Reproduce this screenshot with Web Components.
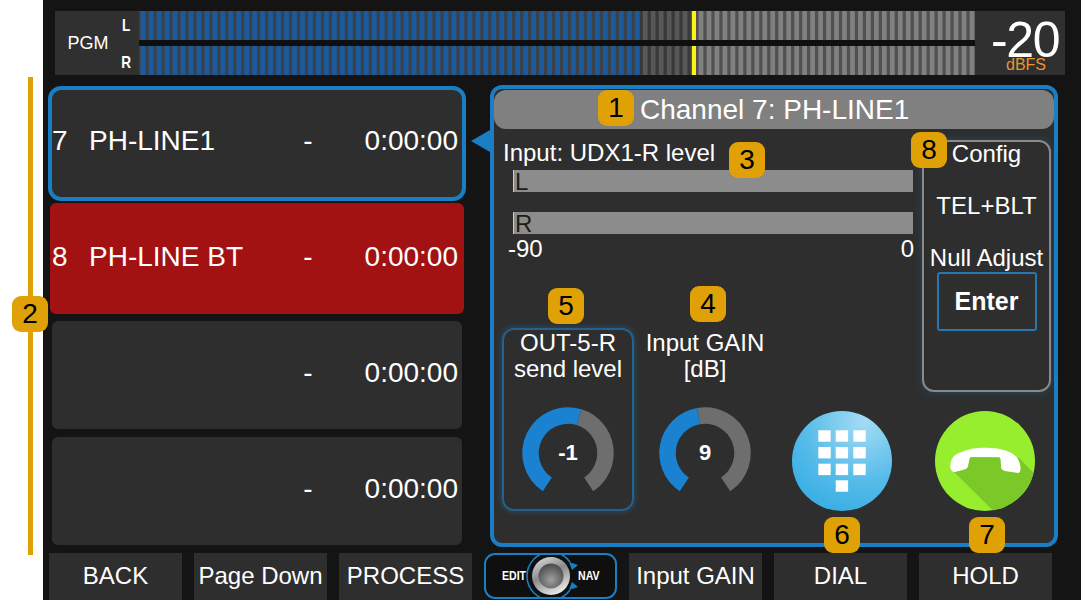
<!DOCTYPE html>
<html>
<head>
<meta charset="utf-8">
<title>Channel 7</title>
<style>
  html, body { margin: 0; padding: 0; background: #fff; }
  body { font-family: "Liberation Sans", Arial, sans-serif; color: #fff; }
</style>
</head>
<body>
<app-screen>
  <meter-row slot="top" label="PGM" value="-20" unit="dBFS"></meter-row>

  <channel-card slot="list" num="7" name="PH-LINE1" time="0:00:00" selected></channel-card>
  <channel-card slot="list" num="8" name="PH-LINE BT" time="0:00:00" alert></channel-card>
  <channel-card slot="list" time="0:00:00"></channel-card>
  <channel-card slot="list" time="0:00:00"></channel-card>

  <channel-panel slot="panel" title="Channel 7: PH-LINE1">
    <level-block slot="level" heading="Input: UDX1-R level" min="-90" max="0"></level-block>
    <config-box slot="config" heading="Config" mode="TEL+BLT" action="Null Adjust" button="Enter"></config-box>
    <gauge-card slot="gauge1" line1="OUT-5-R" line2="send level" value="-1" end="17" active></gauge-card>
    <gauge-card slot="gauge2" line1="Input GAIN" line2="[dB]" value="9" end="-10"></gauge-card>
    <dial-icon slot="dial"></dial-icon>
    <hold-icon slot="hold"></hold-icon>
  </channel-panel>

  <foot-button slot="foot">BACK</foot-button>
  <foot-button slot="foot">Page Down</foot-button>
  <foot-button slot="foot">PROCESS</foot-button>
  <foot-knob slot="foot"></foot-knob>
  <foot-button slot="foot">Input GAIN</foot-button>
  <foot-button slot="foot">DIAL</foot-button>
  <foot-button slot="foot">HOLD</foot-button>

  <num-badge slot="badges" style="left:598px;top:90px">1</num-badge>
  <num-badge slot="badges" style="left:12px;top:296px">2</num-badge>
  <num-badge slot="badges" style="left:729px;top:142px">3</num-badge>
  <num-badge slot="badges" style="left:690px;top:286px">4</num-badge>
  <num-badge slot="badges" style="left:548px;top:288px">5</num-badge>
  <num-badge slot="badges" style="left:824px;top:517px">6</num-badge>
  <num-badge slot="badges" style="left:969px;top:517px">7</num-badge>
  <num-badge slot="badges" style="left:911px;top:132px">8</num-badge>
</app-screen>

<script>
class AppScreen extends HTMLElement {
  constructor() {
    super();
    this.attachShadow({mode: 'open'}).innerHTML = `
      <style>
        :host { display: flex; position: relative; width: 1081px; height: 600px; overflow: hidden; background: #fff; }
        .strip { width: 43px; flex: none; padding-top: 77px; box-sizing: border-box; }
        .strip i { display: block; width: 5px; height: 478px; margin-left: 28px; background: #e0a106; }
        .main { flex: 1; background: #141414; display: flex; flex-direction: column; padding: 11px 0 0 5px; min-width: 0; }
        .content { display: flex; margin-top: 10px; height: 462px; }
        .list { width: 418px; display: flex; flex-direction: column; }
        .right { margin-left: 24px; }
        .foot { display: flex; gap: 12px; margin: 6px 0 0 1px; }
      </style>
      <div class="strip"><i></i></div>
      <div class="main">
        <slot name="top"></slot>
        <div class="content">
          <div class="list"><slot name="list"></slot></div>
          <div class="right"><slot name="panel"></slot></div>
        </div>
        <div class="foot"><slot name="foot"></slot></div>
      </div>
      <slot name="badges"></slot>
    `;
  }
}

class NumBadge extends HTMLElement {
  constructor() {
    super();
    this.attachShadow({mode: 'open'}).innerHTML = `
      <style>
        :host {
          position: absolute; width: 36px; height: 36px; border-radius: 9px;
          background: #e0a106; color: #000; font-size: 28px; line-height: 36px; text-align: center;
        }
      </style>
      <slot></slot>
    `;
  }
}

class MeterRow extends HTMLElement {
  // one row of the LED bar, drawn as thin rects so the soft stripe edges survive
  bar() {
    let rects = '';
    for (let k = -60; k < 46; k++) {
      const x = 472 + 7.97 * k;
      const fill = x < 500 ? '#1a5a9e' : x < 553 ? '#585858' : '#808080';
      rects += `<rect x="${x.toFixed(2)}" width="4.7" height="29" fill="${fill}"/>`;
    }
    return `
      <svg width="836" height="29" viewBox="0 0 836 29">
        <rect width="501" height="29" fill="#3c4148"/>
        <rect x="501" width="52" height="29" fill="#393939"/>
        <rect x="553" width="283" height="29" fill="#505050"/>
        ${rects}
        <rect x="553" width="4" height="29" fill="#fbf315"/>
      </svg>`;
  }

  connectedCallback() {
    this.attachShadow({mode: 'open'}).innerHTML = `
      <style>
        :host { display: flex; width: 1010px; margin-left: 7px; height: 64px; background: #303030; }
        .tag { width: 60px; flex: none; display: flex; align-items: center; justify-content: center; font-size: 18px; padding-left: 6px; box-sizing: border-box; }
        .lr { width: 24px; flex: none; display: flex; flex-direction: column; justify-content: space-between; align-items: center; font-size: 17px; line-height: 18px; font-weight: bold; padding: 6px 2px 3px 0; box-sizing: border-box; }
        .lr span { display: block; transform: scaleX(.8); }
        .bars { flex: 1; display: flex; flex-direction: column; justify-content: space-between; background: #0f0f0f; }
        svg { display: block; }
        .value { width: 90px; flex: none; position: relative; text-align: left; }
        .num { position: absolute; left: 16px; top: 11px; font-size: 50px; line-height: 36px; letter-spacing: -1.3px; }
        .unit { position: absolute; left: 31px; top: 48px; font-size: 16px; line-height: 12px; color: #e8962e; }
      </style>
      <div class="tag">${this.getAttribute('label')}</div>
      <div class="lr"><span>L</span><span>R</span></div>
      <div class="bars">${this.bar()}${this.bar()}</div>
      <div class="value">
        <span class="num">${this.getAttribute('value')}</span>
        <span class="unit">${this.getAttribute('unit')}</span>
      </div>
    `;
  }
}

class ChannelCard extends HTMLElement {
  connectedCallback() {
    this.attachShadow({mode: 'open'}).innerHTML = `
      <style>
        :host {
          display: grid; grid-template-columns: 37px 190px 58px 1fr; align-items: center;
          position: relative; box-sizing: border-box; flex: none;
          height: 108px; margin: 0 4px 8px; padding: 0 4px 4px 0;
          background: #2e2e2e; border-radius: 6px; font-size: 28px;
        }
        :host([selected]) {
          height: 115px; margin: 1px 0 2px; padding: 0 4px 6px 0;
          border: 4px solid #1a7ec4; border-radius: 13px;
        }
        :host([alert]) {
          height: 111px; margin: 0 2px 7px; background: #a31212; padding: 0 6px 3px 2px;
        }
        .arrow { display: none; position: absolute; left: 419px; top: 40px; width: 0; height: 0;
          border: 11px solid transparent; border-right: 19px solid #1a7ec4; border-left: 0; }
        :host([selected]) .arrow { display: block; }
        .dash { text-align: center; }
        .time { text-align: right; }
      </style>
      <span class="num">${this.getAttribute('num') || ''}</span>
      <span class="name">${this.getAttribute('name') || ''}</span>
      <span class="dash">-</span>
      <span class="time">${this.getAttribute('time')}</span>
      <span class="arrow"></span>
    `;
  }
}

class ChannelPanel extends HTMLElement {
  connectedCallback() {
    this.attachShadow({mode: 'open'}).innerHTML = `
      <style>
        :host {
          display: block; box-sizing: border-box; width: 568px; height: 462px;
          background: #2e2e2e; border: 4px solid #1a7ec4; border-radius: 12px;
        }
        .title {
          height: 39px; margin: 1px 0 0; border-radius: 12px; background: #808080;
          font-size: 28px; line-height: 39px; padding-left: 146px;
        }
        .body {
          display: grid; margin: 11px 0 0 8px;
          grid-template-columns: 138px 130px 152px 129px;
          grid-template-rows: 188px 64px 119px;
        }
        .level { grid-column: 1 / 4; grid-row: 1; }
        .config { grid-column: 4; grid-row: 1 / 3; display: flex; }
        .g1 { grid-column: 1; grid-row: 2 / 4; display: flex; }
        .g2 { grid-column: 2; grid-row: 2 / 4; display: flex; }
        .dial { grid-column: 3; grid-row: 3; display: flex; justify-content: center; align-items: flex-end; padding-right: 8px; }
        .hold { grid-column: 4; grid-row: 3; display: flex; justify-content: center; align-items: flex-end; padding-right: 3px; }
      </style>
      <div class="title">${this.getAttribute('title')}</div>
      <div class="body">
        <div class="level"><slot name="level"></slot></div>
        <div class="config"><slot name="config"></slot></div>
        <div class="g1"><slot name="gauge1"></slot></div>
        <div class="g2"><slot name="gauge2"></slot></div>
        <div class="dial"><slot name="dial"></slot></div>
        <div class="hold"><slot name="hold"></slot></div>
      </div>
    `;
  }
}

class LevelBlock extends HTMLElement {
  connectedCallback() {
    this.attachShadow({mode: 'open'}).innerHTML = `
      <style>
        :host { display: block; font-size: 24px; }
        .head { margin-left: 1px; line-height: 25px; height: 30px; }
        .bar {
          height: 22px; margin: 0 9px 20px 11px; background: #8c8c8c; color: #1c1c1c;
          border-left: 1px solid #efdc1e; line-height: 24px; box-sizing: border-box; padding-left: 1px;
        }
        .scale { display: flex; justify-content: space-between; margin: -20px 8px 0 6px; line-height: 30px; }
      </style>
      <div class="head">${this.getAttribute('heading')}</div>
      <div class="bar">L</div>
      <div class="bar">R</div>
      <div class="scale"><span>${this.getAttribute('min')}</span><span>${this.getAttribute('max')}</span></div>
    `;
  }
}

class ConfigBox extends HTMLElement {
  connectedCallback() {
    this.attachShadow({mode: 'open'}).innerHTML = `
      <style>
        :host {
          display: flex; flex-direction: column; align-items: center; box-sizing: border-box;
          width: 129px; height: 252px;
          border: 2px solid #8a8a8a; border-radius: 12px;
          box-shadow: 0 0 8px rgba(26, 126, 196, .35);
          font-size: 24px;
        }
        .row { line-height: 26px; white-space: nowrap; }
        .head { margin-top: -1px; }
        .mode { margin-top: 26px; }
        .act { margin-top: 26px; }
        button {
          display: block; box-sizing: border-box; width: 100px; height: 59px; margin-top: 1px;
          background: none; color: #fff; border: 2px solid #2a76ae; border-radius: 3px;
          font: bold 25px "Liberation Sans", Arial, sans-serif;
        }
      </style>
      <div class="row head">${this.getAttribute('heading')}</div>
      <div class="row mode">${this.getAttribute('mode')}</div>
      <div class="row act">${this.getAttribute('action')}</div>
      <button>${this.getAttribute('button')}</button>
    `;
  }
}

class GaugeCard extends HTMLElement {
  // point on the ring, deg measured clockwise from the top
  pt(deg) {
    const r = (deg * Math.PI) / 180;
    return (50 + 37.5 * Math.sin(r)).toFixed(2) + ' ' + (50 - 37.5 * Math.cos(r)).toFixed(2);
  }

  connectedCallback() {
    const start = -146.5, stop = 146.5, end = Number(this.getAttribute('end'));
    this.attachShadow({mode: 'open'}).innerHTML = `
      <style>
        :host {
          display: flex; flex-direction: column; align-items: center; box-sizing: border-box;
          width: 132px; height: 183px; border: 2px solid transparent; border-radius: 12px;
          font-size: 24px; line-height: 26px; text-align: center;
        }
        :host([active]) { border-color: #25618c; box-shadow: 0 0 7px rgba(26, 126, 196, .45); }
        .txt { white-space: nowrap; }
        .ring { position: relative; width: 100px; height: 100px; margin-top: 21px; }
        svg { display: block; }
        .val { position: absolute; left: 0; right: 0; top: 0; line-height: 100px; font-size: 22px; font-weight: bold; }
      </style>
      <div class="txt">${this.getAttribute('line1')}<br>${this.getAttribute('line2')}</div>
      <div class="ring">
        <svg width="100" height="100" viewBox="0 0 100 100" fill="none" stroke-width="16.5">
          <path stroke="#6e6e6e" d="M${this.pt(end)} A37.5 37.5 0 ${stop - end > 180 ? 1 : 0} 1 ${this.pt(stop)}"/>
          <path stroke="#1a82d0" d="M${this.pt(start)} A37.5 37.5 0 0 1 ${this.pt(end)}"/>
        </svg>
        <div class="val">${this.getAttribute('value')}</div>
      </div>
    `;
  }
}

class DialIcon extends HTMLElement {
  connectedCallback() {
    let keys = '';
    [19.3, 36, 52.7, 69.3].forEach((y, row) => {
      [26.3, 43.7, 61.3].forEach((x, col) => {
        if (row < 3 || col === 1) keys += `<rect x="${x}" y="${y}" width="12.4" height="11.4"/>`;
      });
    });
    this.attachShadow({mode: 'open'}).innerHTML = `
      <style>:host { display: block; width: 100px; height: 100px; } svg { display: block; }</style>
      <svg width="100" height="100" viewBox="0 0 100 100">
        <defs>
          <radialGradient id="g" cx="0.72" cy="0.1" r="0.95">
            <stop offset="0" stop-color="#a4dcf5"/>
            <stop offset="0.65" stop-color="#55bbe9"/>
            <stop offset="1" stop-color="#3aaee4"/>
          </radialGradient>
        </defs>
        <circle cx="50" cy="50" r="50" fill="url(#g)"/>
        <g fill="#fff">${keys}</g>
      </svg>
    `;
  }
}

class HoldIcon extends HTMLElement {
  constructor() {
    super();
    this.attachShadow({mode: 'open'}).innerHTML = `
      <style>:host { display: block; width: 100px; height: 100px; } svg { display: block; }</style>
      <svg width="100" height="100" viewBox="0 0 100 100">
        <defs><clipPath id="c"><circle cx="50" cy="50" r="50"/></clipPath></defs>
        <circle cx="50" cy="50" r="50" fill="#97ee2f"/>
        <polygon clip-path="url(#c)" fill="#7ac928" points="17,59 58.5,100 100,100 100,63 84,47 34,46"/>
        <path fill="#fff" d="M15.3 55 C15.5 47 20 42.5 27 41 C34 37.5 42 36.7 50 36.7 C58 36.7 67 37.5 74 41 C81 43.5 85 49 85.5 57 C85.6 60 85 62 83 62 L70 60 C66.5 59 66 57 66 55 L65.5 48 C65.3 46.5 64.5 46 63 46 L37 46 C35.5 46 34.7 46.5 34.5 48 L33 55 C32.7 57 31.5 58 29.5 58.5 L20 61 C17 61.3 15.3 58.5 15.3 55 Z"/>
      </svg>
    `;
  }
}

class FootButton extends HTMLElement {
  constructor() {
    super();
    this.attachShadow({mode: 'open'}).innerHTML = `
      <style>
        :host {
          display: block; box-sizing: border-box; width: 133px; height: 47px; flex: none;
          background: #2e2e2e; font-size: 24px; line-height: 46px; text-align: center; white-space: nowrap;
        }
      </style>
      <slot></slot>
    `;
  }
}

class FootKnob extends HTMLElement {
  constructor() {
    super();
    this.attachShadow({mode: 'open'}).innerHTML = `
      <style>
        :host {
          display: block; box-sizing: border-box; position: relative; width: 133px; height: 46px; flex: none;
          border: 2px solid #1a7ec4; border-radius: 11px; background: #0f0f0f;
          font-size: 12px; font-weight: bold;
          overflow: hidden;
        }
        svg { position: absolute; left: 0; top: 0; }
        span { position: absolute; top: 15px; line-height: 12px; transform: scaleX(.88); transform-origin: left; }
        .l { left: 16px; }
        .r { left: 92px; }
      </style>
      <svg width="129" height="42" viewBox="0 0 129 42">
        <defs>
          <linearGradient id="ring" x1="0.2" y1="0" x2="0.7" y2="1">
            <stop offset="0" stop-color="#d8d8d8"/>
            <stop offset="0.45" stop-color="#8a8a8a"/>
            <stop offset="1" stop-color="#f0f0f0"/>
          </linearGradient>
          <radialGradient id="cap" cx="0.5" cy="0.65" r="0.6">
            <stop offset="0" stop-color="#a0a0a0"/>
            <stop offset="1" stop-color="#4f4f4f"/>
          </radialGradient>
        </defs>
        <g fill="none" stroke="#1a7ec4" stroke-width="1.6">
          <path d="M65 -3 A24 24 0 0 0 65 45"/>
          <path d="M65 -3 A24 24 0 0 1 84 7"/>
          <path d="M65 45 A24 24 0 0 0 84 35"/>
        </g>
        <path fill="#1a7ec4" d="M83 7 L92 10 L86 15 Z M83 35 L92 32 L86 27 Z"/>
        <circle cx="65" cy="21" r="19" fill="url(#ring)"/>
        <circle cx="65" cy="21" r="12.5" fill="url(#cap)"/>
      </svg>
      <span class="l">EDIT</span>
      <span class="r">NAV</span>
    `;
  }
}

customElements.define('num-badge', NumBadge);
customElements.define('meter-row', MeterRow);
customElements.define('channel-card', ChannelCard);
customElements.define('level-block', LevelBlock);
customElements.define('config-box', ConfigBox);
customElements.define('gauge-card', GaugeCard);
customElements.define('dial-icon', DialIcon);
customElements.define('hold-icon', HoldIcon);
customElements.define('foot-button', FootButton);
customElements.define('foot-knob', FootKnob);
customElements.define('channel-panel', ChannelPanel);
customElements.define('app-screen', AppScreen);
</script>
</body>
</html>
